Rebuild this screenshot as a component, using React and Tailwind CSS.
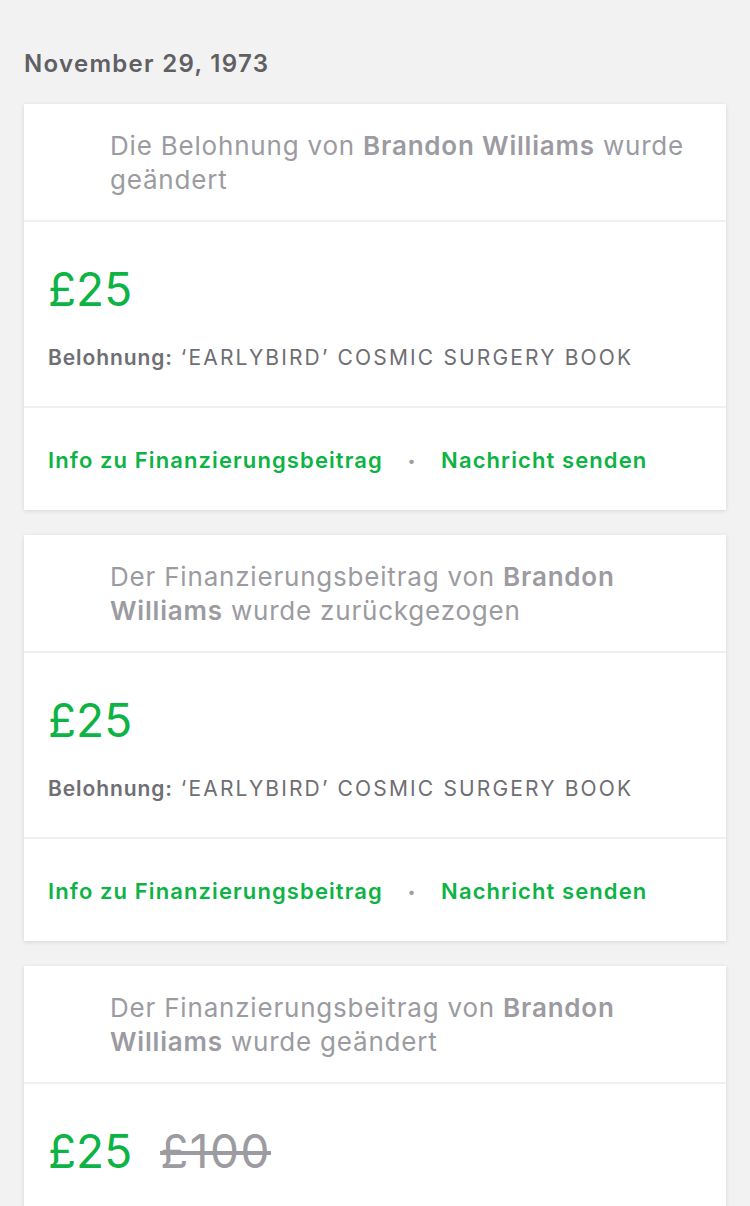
const items = [
    {
        title: (
            <>
                Die Belohnung von <span className="font-semibold">Brandon Williams</span> wurde geändert
            </>
        ),
        amount: '£25',
        reward: '‘EARLYBIRD’ COSMIC SURGERY BOOK',
    },
    {
        title: (
            <>
                Der Finanzierungsbeitrag von <span className="font-semibold">Brandon Williams</span> wurde zurückgezogen
            </>
        ),
        amount: '£25',
        reward: '‘EARLYBIRD’ COSMIC SURGERY BOOK',
    },
    {
        title: (
            <>
                Der Finanzierungsbeitrag von <span className="font-semibold">Brandon Williams</span> wurde geändert
            </>
        ),
        amount: '£25',
        oldAmount: '£100',
        reward: '‘EARLYBIRD’ COSMIC SURGERY BOOK',
    },
];

const ActivityCard = ({ item }) => (
    <div className="bg-white shadow-[0_1px_4px_rgba(0,0,0,0.12)]">
        <div className="h-[118px] pl-[86px] pr-6 pt-[25px] text-[26px] leading-[34px] tracking-[0.8px] text-[#9b9ba1] border-b-2 border-[#f0f0f2]">
            {item.title}
        </div>
        <div className="h-[186px] px-6 pt-[39px] border-b-2 border-[#f0f0f2]">
            <div className="flex items-center gap-[28px] text-[46px] leading-[56px]">
                <span className="text-[#0db344]">{item.amount}</span>
                {item.oldAmount && (
                    <span className="text-[#9b9ba1] line-through tracking-[1.5px]">{item.oldAmount}</span>
                )}
            </div>
            <p className="mt-[27px] text-[21px] leading-[28px] tracking-[2.15px] text-[#6e6e73]">
                <span className="font-semibold tracking-[0.9px]">Belohnung:</span> {item.reward}
            </p>
        </div>
        <div className="h-[102px] flex items-center pt-[2px] px-6 text-[22px] font-semibold tracking-[1.1px] text-[#0db344]">
            <span>Info zu Finanzierungsbeitrag</span>
            <span className="mx-[25px] text-[#9b9ba1] text-[14px]">•</span>
            <span>Nachricht senden</span>
        </div>
    </div>
);

export default function App() {
    return (
        <div className="min-h-[1206px] bg-[#f2f2f2] px-6 pt-[47px] font-['Inter',sans-serif]">
            <h2 className="text-[24px] leading-[34px] font-semibold tracking-[1.3px] text-[#5f5f64] mb-[23px]">
                November 29, 1973
            </h2>
            <div className="flex flex-col gap-[25px]">
                {items.map((item, i) => (
                    <ActivityCard key={i} item={item} />
                ))}
            </div>
        </div>
    );
}
